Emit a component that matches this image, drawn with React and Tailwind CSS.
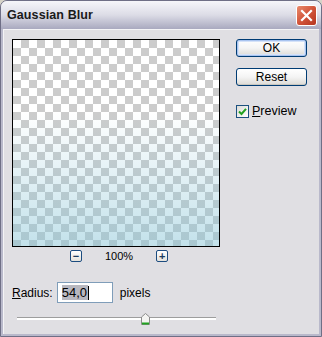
import { useState } from 'react';

const font = { fontFamily: '"Liberation Sans", Arial, sans-serif' };

function XpButton({ children, isDefault }) {
  return (
    <button
      className={`block w-[71px] h-[18px] rounded-[3px] border border-[#003c74] bg-gradient-to-b from-white via-[#f4f4f4] to-[#dcdad5] text-[12px] leading-none text-black ${
        isDefault ? 'shadow-[inset_0_0_0_1px_#a9c4f0,inset_0_0_0_2px_#d5e2f8]' : 'shadow-[inset_0_-1px_0_#c9c7c0]'
      }`}
    >
      {children}
    </button>
  );
}

function ZoomBox({ children }) {
  return (
    <div className="w-[12px] h-[12px] rounded-[2px] border border-[#1c4c80] bg-gradient-to-b from-white to-[#e4e2dc] flex items-center justify-center text-[11px] leading-none font-bold text-[#1c3c60]">
      {children}
    </div>
  );
}

export default function App() {
  const [preview, setPreview] = useState(true);
  const [radius, setRadius] = useState('54,0');

  return (
    <div className="w-[322px] h-[337px] bg-[#d6d3c8]" style={font}>
      <div className="w-[322px] h-[337px] flex flex-col rounded-t-[7px] overflow-hidden border border-[#6f6f86] bg-[#c8c8d6]">
        {/* title bar */}
        <div className="h-[28px] shrink-0 flex items-center justify-between pl-[6px] pr-[4px] bg-gradient-to-b from-[#f6f6fa] via-[#dcdce6] to-[#a9a9bf]">
          <span className="text-[12.5px] font-bold text-[#1a1a1a] tracking-[0.1px]">Gaussian Blur</span>
          <div className="w-[21px] h-[21px] rounded-[3px] border border-white bg-gradient-to-br from-[#e88a6c] via-[#d2543a] to-[#b5341e] flex items-center justify-center">
            <svg width="13" height="13" viewBox="0 0 13 13">
              <path d="M2 2 L11 11 M11 2 L2 11" stroke="white" strokeWidth="2.2" strokeLinecap="square" />
            </svg>
          </div>
        </div>

        {/* body */}
        <div className="flex-1 border-x-[2px] border-b-[2px] border-[#b9b9cb]">
          <div className="h-full bg-[#e0dfe3] border-l border-t border-[#f4f4f6] pl-[8px] pt-[9px] flex">
            <div className="flex flex-col w-[208px]">
              <div className="relative w-[208px] h-[208px] border border-black bg-[repeating-conic-gradient(#cccccc_0_25%,#ffffff_0_50%)] bg-[length:16px_16px]">
                <div className="absolute inset-0 bg-gradient-to-b from-transparent from-[35%] to-[rgba(135,196,214,0.5)]" />
              </div>

              <div className="flex items-center mt-[3px] h-[12px]">
                <div className="ml-[58px]">
                  <ZoomBox>−</ZoomBox>
                </div>
                <span className="ml-[23px] text-[11px] text-black">100%</span>
                <div className="ml-[23px]">
                  <ZoomBox>+</ZoomBox>
                </div>
              </div>

              <div className="flex items-center mt-[20px] h-[21px]">
                <span className="text-[12px] text-black">
                  <span className="underline">R</span>adius:
                </span>
                <div className="ml-[4px] w-[56px] h-[21px] border border-[#7f9db9] bg-white flex items-center pl-[4px]">
                  <input
                    value={radius}
                    onChange={(e) => setRadius(e.target.value)}
                    className="w-[26px] text-[13px] leading-none bg-[#b8b8c0] text-black outline-none p-0"
                    style={font}
                  />
                  <span className="w-px h-[14px] bg-black" />
                </div>
                <span className="ml-[7px] text-[12px] text-black">pixels</span>
              </div>

              <div className="relative mt-[10px] ml-[5px] w-[199px] h-[12px]">
                <div className="absolute left-0 right-0 top-[4px] h-[3px] border-t border-[#9d9d9d] bg-white" />
                <div className="absolute left-[124px] top-0">
                  <svg width="9" height="12" viewBox="0 0 9 12">
                    <path d="M0.5 4 L4.5 0.5 L8.5 4 L8.5 11.5 L0.5 11.5 Z" fill="#f4f4f2" stroke="#8c8c8c" />
                    <rect x="1" y="9.5" width="7" height="2" fill="#21a121" />
                  </svg>
                </div>
              </div>
            </div>

            <div className="ml-[16px] flex flex-col">
              <XpButton isDefault>OK</XpButton>
              <div className="mt-[11px]">
                <XpButton>Reset</XpButton>
              </div>
              <label className="mt-[16px] flex items-center gap-[3px] cursor-default">
                <span
                  onClick={() => setPreview(!preview)}
                  className="w-[13px] h-[13px] border border-[#1c5180] bg-gradient-to-br from-[#dcdcd7] to-white flex items-center justify-center"
                >
                  {preview && (
                    <svg width="9" height="9" viewBox="0 0 9 9">
                      <path d="M1 4.5 L3.5 7 L8 1.8" stroke="#21a121" strokeWidth="2" fill="none" />
                    </svg>
                  )}
                </span>
                <span className="text-[12.5px] text-black">
                  <span className="underline">P</span>review
                </span>
              </label>
            </div>
          </div>
        </div>
      </div>
    </div>
  );
}
